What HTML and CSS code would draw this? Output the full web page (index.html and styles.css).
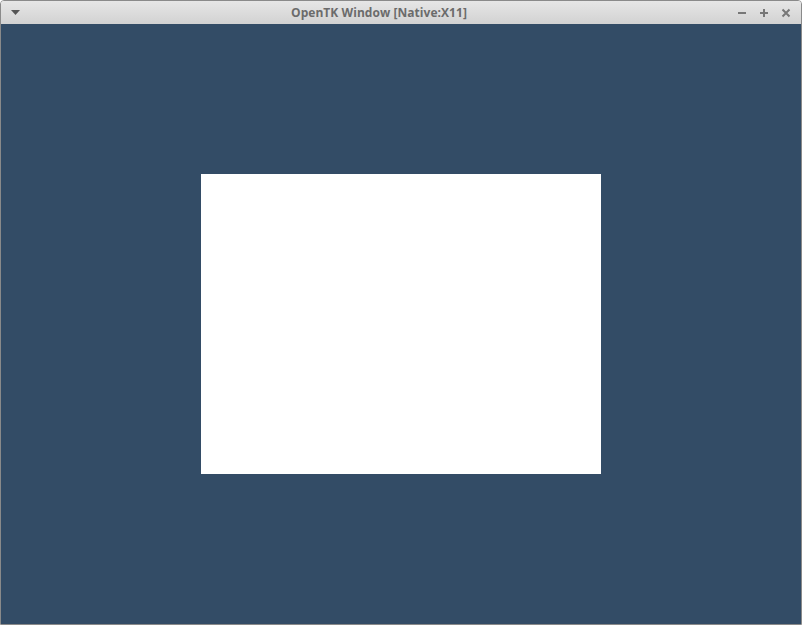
FILE: index.html
```html
<!DOCTYPE html>
<html>
<head>
<meta charset="utf-8">
<link rel="stylesheet" href="styles.css">
</head>
<body>
<div class="window">
  <div class="titlebar">
    <div class="menu-btn">
      <svg width="9" height="6" viewBox="0 0 9 6"><path d="M0 0H9L4.5 5Z" fill="#555"/></svg>
    </div>
    <div class="title">OpenTK Window [Native:X11]</div>
    <div class="controls">
      <svg class="ctl" width="10" height="10" viewBox="0 0 10 10"><rect x="1" y="4" width="8" height="2" fill="#777"/></svg>
      <svg class="ctl" width="10" height="10" viewBox="0 0 10 10"><rect x="1" y="4" width="8" height="2" fill="#777"/><rect x="4" y="1" width="2" height="8" fill="#777"/></svg>
      <svg class="ctl" width="10" height="10" viewBox="0 0 10 10"><path d="M1.5 1.5L8.5 8.5M8.5 1.5L1.5 8.5" stroke="#777" stroke-width="2"/></svg>
    </div>
  </div>
  <div class="canvas">
    <div class="quad"></div>
  </div>
</div>
</body>
</html>
```
FILE: styles.css
```css
html, body {
  margin: 0;
  padding: 0;
  background: #ffffff;
}
.window {
  width: 800px;
  height: 623px;
  border: 1px solid #8a8a8a;
  border-radius: 4px 4px 0 0;
  display: flex;
  flex-direction: column;
  overflow: hidden;
}
.titlebar {
  height: 23px;
  background: linear-gradient(#e6e6e6, #d2d2d2);
  display: flex;
  align-items: center;
  padding: 0 10px 0 10px;
}
.menu-btn {
  width: 14px;
  display: flex;
  align-items: center;
  padding-top: 1px;
}
.title {
  flex: 1;
  text-align: center;
  font-family: "Open Sans", "Noto Sans", sans-serif;
  font-weight: bold;
  font-size: 12px;
  letter-spacing: 0.05px;
  color: #6b6b6b;
  padding-right: 4px;
}
.controls {
  display: flex;
  gap: 12px;
  align-items: center;
  padding-top: 1px;
}
.ctl {
  display: block;
}
.canvas {
  flex: 1;
  background: #334c66;
  display: flex;
  align-items: center;
  justify-content: center;
}
.quad {
  width: 400px;
  height: 300px;
  background: #ffffff;
}
```
